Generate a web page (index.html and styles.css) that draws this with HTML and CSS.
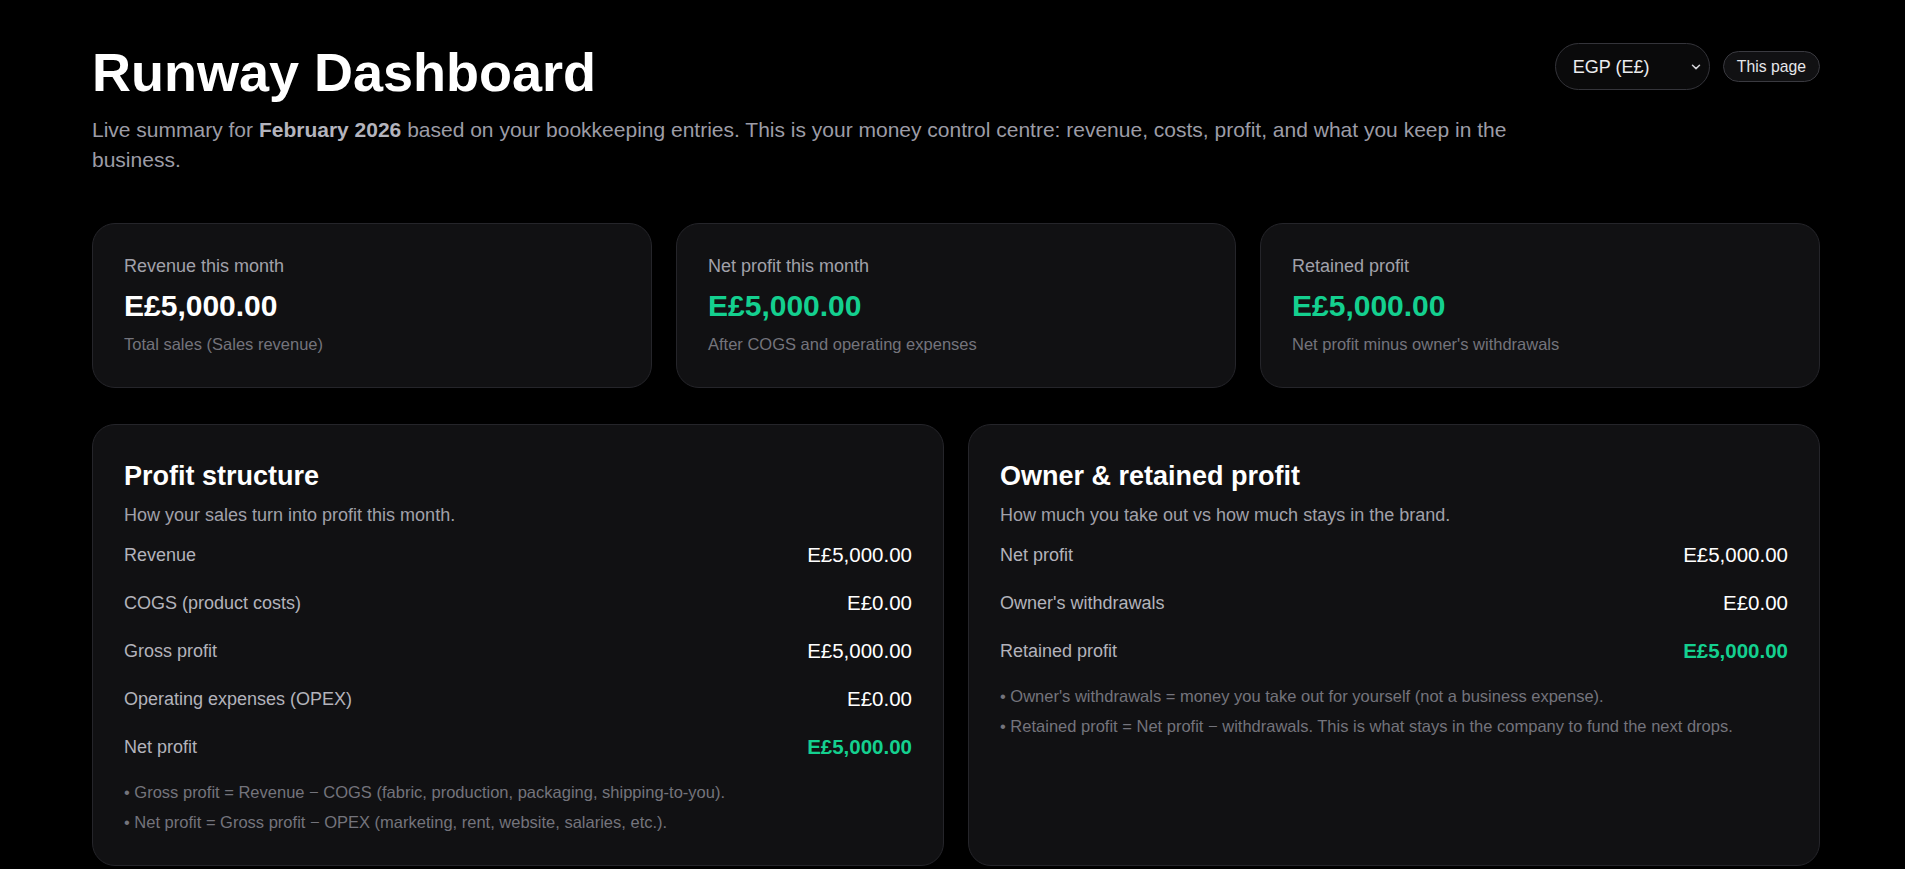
FILE: index.html
```html
<!DOCTYPE html>
<html lang="en">
<head>
<meta charset="utf-8">
<title>Runway Dashboard</title>
<link rel="stylesheet" href="styles.css">
</head>
<body>
<main class="page">
  <header class="header">
    <div class="intro">
      <h1 class="title">Runway Dashboard</h1>
      <p class="lead">Live summary for <strong>February 2026</strong> based on your bookkeeping entries. This is your money control centre: revenue, costs, profit, and what you keep in the business.</p>
    </div>
    <div class="controls">
      <div class="select-wrap">
        <select class="currency">
          <option>EGP (E£)</option>
          <option>USD ($)</option>
        </select>
        <svg class="chevron" width="10" height="6" viewBox="0 0 10 6" aria-hidden="true"><path d="M1.5 1.2l3.5 3.4 3.5-3.4" fill="none" stroke="#d4d4d8" stroke-width="1.5" stroke-linecap="round" stroke-linejoin="round"/></svg>
      </div>
      <span class="pill">This page</span>
    </div>
  </header>

  <section class="stats">
    <div class="card">
      <div class="card-label">Revenue this month</div>
      <div class="card-value">E£5,000.00</div>
      <div class="card-sub">Total sales (Sales revenue)</div>
    </div>
    <div class="card">
      <div class="card-label">Net profit this month</div>
      <div class="card-value green">E£5,000.00</div>
      <div class="card-sub">After COGS and operating expenses</div>
    </div>
    <div class="card">
      <div class="card-label">Retained profit</div>
      <div class="card-value green">E£5,000.00</div>
      <div class="card-sub">Net profit minus owner's withdrawals</div>
    </div>
  </section>

  <section class="panels">
    <div class="panel">
      <h2 class="panel-title">Profit structure</h2>
      <p class="panel-sub">How your sales turn into profit this month.</p>
      <div class="rows">
        <div class="row"><span class="row-label">Revenue</span><span class="row-value">E£5,000.00</span></div>
        <div class="row"><span class="row-label">COGS (product costs)</span><span class="row-value">E£0.00</span></div>
        <div class="row"><span class="row-label">Gross profit</span><span class="row-value">E£5,000.00</span></div>
        <div class="row"><span class="row-label">Operating expenses (OPEX)</span><span class="row-value">E£0.00</span></div>
        <div class="row"><span class="row-label">Net profit</span><span class="row-value green strong">E£5,000.00</span></div>
      </div>
      <div class="notes">
        <p>• Gross profit = Revenue − COGS (fabric, production, packaging, shipping-to-you).</p>
        <p>• Net profit = Gross profit − OPEX (marketing, rent, website, salaries, etc.).</p>
      </div>
    </div>
    <div class="panel">
      <h2 class="panel-title">Owner &amp; retained profit</h2>
      <p class="panel-sub">How much you take out vs how much stays in the brand.</p>
      <div class="rows">
        <div class="row"><span class="row-label">Net profit</span><span class="row-value">E£5,000.00</span></div>
        <div class="row"><span class="row-label">Owner's withdrawals</span><span class="row-value">E£0.00</span></div>
        <div class="row"><span class="row-label">Retained profit</span><span class="row-value green strong">E£5,000.00</span></div>
      </div>
      <div class="notes">
        <p>• Owner's withdrawals = money you take out for yourself (not a business expense).</p>
        <p>• Retained profit = Net profit − withdrawals. This is what stays in the company to fund the next drops.</p>
      </div>
    </div>
  </section>
</main>
</body>
</html>
```

FILE: styles.css
```css
* { box-sizing: border-box; }

html, body {
  margin: 0;
  padding: 0;
  background: #000;
  color: #fff;
  font-family: "Liberation Sans", Arial, Helvetica, sans-serif;
}

.page {
  padding: 43px 85px 2px 92px;
}

.header {
  display: flex;
  justify-content: space-between;
  align-items: flex-start;
}

.title {
  margin: 0;
  font-size: 54px;
  line-height: 1.1;
  font-weight: 700;
  color: #fff;
}

.lead {
  margin: 13px 0 0;
  max-width: 1460px;
  font-size: 21px;
  line-height: 30px;
  color: #9c9ca6;
}

.lead strong {
  color: #b4b4bd;
  font-weight: 700;
}

.controls {
  display: flex;
  align-items: center;
  gap: 13px;
}

.select-wrap {
  position: relative;
  width: 155px;
  height: 47px;
}

.currency {
  appearance: none;
  -webkit-appearance: none;
  width: 100%;
  height: 100%;
  padding: 0 30px 0 17px;
  border: 1px solid #34343a;
  border-radius: 999px;
  background: #0a0a0b;
  color: #ececef;
  font-family: "Liberation Sans", Arial, sans-serif;
  font-size: 18px;
  outline: none;
}

.chevron {
  position: absolute;
  right: 9px;
  top: 21px;
  pointer-events: none;
}

.pill {
  display: inline-block;
  height: 31px;
  padding: 0 13px;
  border: 1px solid #3a3a40;
  border-radius: 999px;
  background: #111113;
  color: #e6e6ea;
  font-size: 15.75px;
  line-height: 29px;
}

.stats {
  display: grid;
  grid-template-columns: repeat(3, 1fr);
  gap: 24px;
  margin-top: 48px;
}

.card {
  background: #111113;
  border: 1px solid #25252a;
  border-radius: 23px;
  padding: 30px 31px 32px;
}

.card-label {
  font-size: 18px;
  line-height: 25px;
  color: #a1a1aa;
}

.card-value {
  margin-top: 9px;
  font-size: 30px;
  line-height: 36px;
  font-weight: 700;
  color: #fff;
}

.card-sub {
  margin-top: 9px;
  font-size: 16.5px;
  line-height: 22px;
  color: #74747c;
}

.green { color: #14d08f; }

.panels {
  display: grid;
  grid-template-columns: repeat(2, 1fr);
  gap: 24px;
  margin-top: 36px;
}

.panel {
  background: #111113;
  border: 1px solid #25252a;
  border-radius: 23px;
  padding: 35px 31px 30px;
}

.panel-title {
  margin: 0;
  font-size: 27px;
  line-height: 32px;
  font-weight: 700;
  color: #fff;
}

.panel-sub {
  margin: 10px 0 0;
  font-size: 18px;
  line-height: 27px;
  color: #a1a1aa;
}

.rows {
  margin-top: 2px;
}

.row {
  display: flex;
  justify-content: space-between;
  align-items: center;
  height: 48px;
}

.row-label {
  font-size: 18px;
  color: #b3b3bb;
}

.row-value {
  font-size: 20.5px;
  color: #fff;
}

.row-value.strong {
  font-weight: 700;
  color: #14d08f;
}

.notes {
  margin-top: 9px;
  display: flex;
  flex-direction: column;
  gap: 5px;
}

.notes p {
  margin: 0;
  font-size: 16.5px;
  line-height: 25px;
  color: #74747c;
}
```
